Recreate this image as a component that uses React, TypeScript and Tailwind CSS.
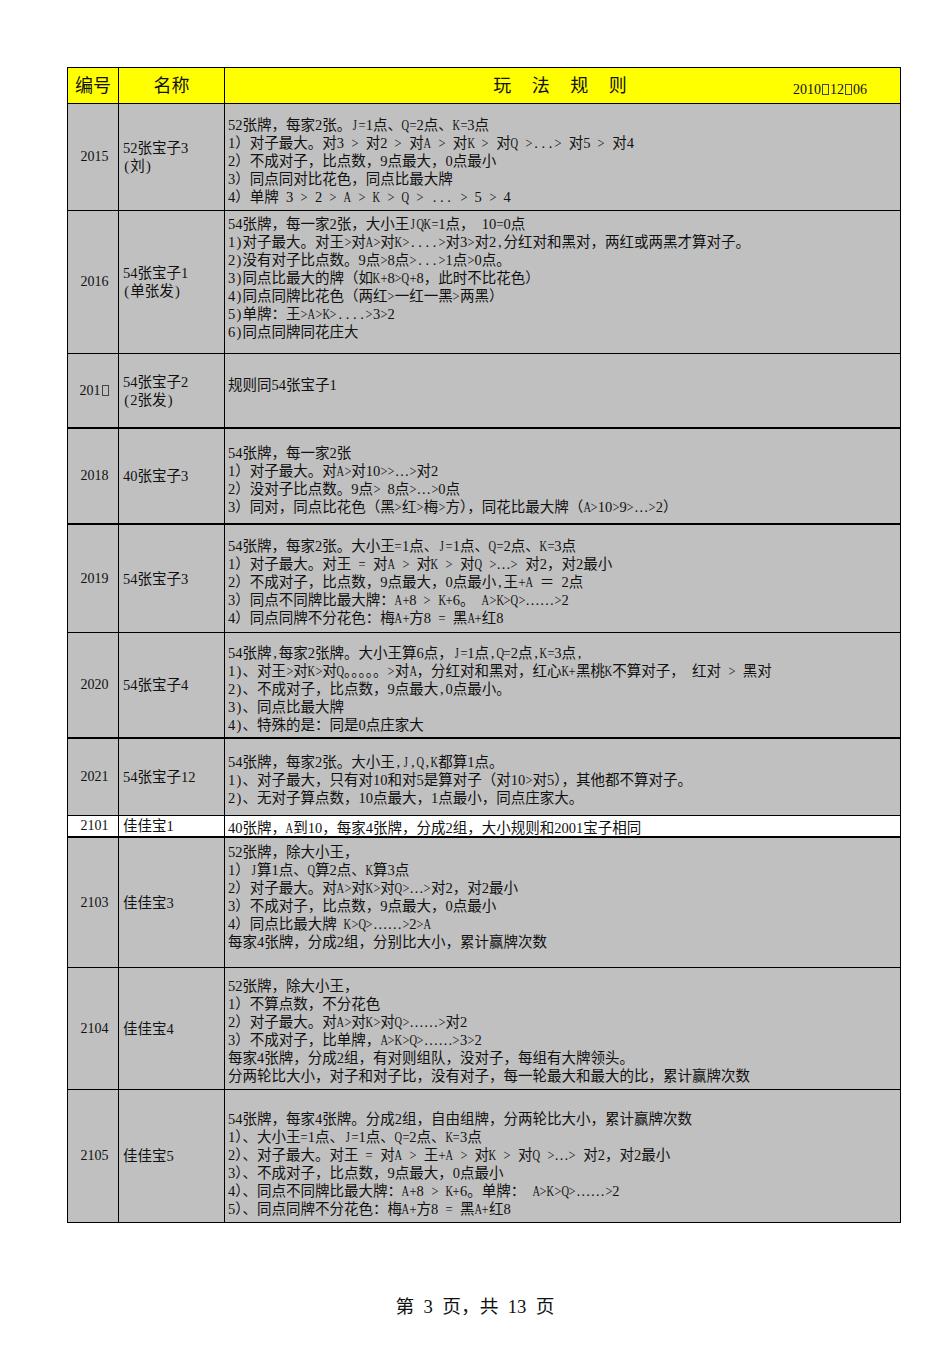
import React from "react";

const Tofu = () => (
  <span className="inline-block w-[7px] h-[11px] border border-[#444] mx-[1px] align-[-1px]" />
);

const Txt = ({ s, w = "w-[7.25px]" }: { s: string; w?: string }) => {
  const out: React.ReactNode[] = [];
  let buf = "";
  let k = 0;
  for (const c of s) {
    if (c.charCodeAt(0) < 128) {
      if (buf) {
        out.push(<React.Fragment key={k++}>{buf}</React.Fragment>);
        buf = "";
      }
      let inner: React.ReactNode = c === " " ? "\u00a0" : c;
      if (/[A-Z]/.test(c)) {
        inner = <span className="inline-block scale-x-[0.72]">{c}</span>;
      } else if (/[=+<>]/.test(c)) {
        inner = <span className="inline-block scale-x-[0.86]">{c}</span>;
      }
      out.push(
        <span key={k++} className={`inline-flex justify-center ${w}`}>
          {inner}
        </span>
      );
    } else {
      buf += c;
    }
  }
  if (buf) out.push(<React.Fragment key={k++}>{buf}</React.Fragment>);
  return <>{out}</>;
};

type Row = {
  num: React.ReactNode;
  name: string[];
  rules: string[];
  h: string;
  pt: string;
  thick?: boolean;
  white?: boolean;
};

const rows: Row[] = [
  {
    num: "2015",
    name: ["52张宝子3", "(刘)"],
    rules: [
      "52张牌，每家2张。J=1点、Q=2点、K=3点",
      "1）对子最大。对3 > 对2 > 对A > 对K > 对Q >...> 对5 > 对4",
      "2）不成对子，比点数，9点最大，0点最小",
      "3）同点同对比花色，同点比最大牌",
      "4）单牌 3 > 2 > A > K > Q > ... > 5 > 4",
    ],
    h: "h-[107px]",
    pt: "pt-[12px]",
  },
  {
    num: "2016",
    name: ["54张宝子1", "(单张发)"],
    rules: [
      "54张牌，每一家2张，大小王JQK=1点， 10=0点",
      "1)对子最大。对王>对A>对K>....>对3>对2,分红对和黑对，两红或两黑才算对子。",
      "2)没有对子比点数。9点>8点>...>1点>0点。",
      "3)同点比最大的牌（如K+8>Q+8，此时不比花色）",
      "4)同点同牌比花色（两红>一红一黑>两黑）",
      "5)单牌：王>A>K>....>3>2",
      "6)同点同牌同花庄大",
    ],
    h: "h-[143px]",
    pt: "pt-[4px]",
  },
  {
    num: (
      <>
        201
        <Tofu />
      </>
    ),
    name: ["54张宝子2", "(2张发)"],
    rules: ["规则同54张宝子1"],
    h: "h-[75px]",
    pt: "pt-[22px]",
    thick: true,
  },
  {
    num: "2018",
    name: ["40张宝子3"],
    rules: [
      "54张牌，每一家2张",
      "1）对子最大。对A>对10>>…>对2",
      "2）没对子比点数。9点> 8点>…>0点",
      "3）同对，同点比花色（黑>红>梅>方），同花比最大牌（A>10>9>…>2）",
    ],
    h: "h-[96px]",
    pt: "pt-[15px]",
    thick: true,
  },
  {
    num: "2019",
    name: ["54张宝子3"],
    rules: [
      "54张牌，每家2张。大小王=1点、J=1点、Q=2点、K=3点",
      "1）对子最大。对王 = 对A > 对K > 对Q >…> 对2，对2最小",
      "2）不成对子，比点数，9点最大，0点最小,王+A ＝ 2点",
      "3）同点不同牌比最大牌：A+8 > K+6。 A>K>Q>……>2",
      "4）同点同牌不分花色：梅A+方8 = 黑A+红8",
    ],
    h: "h-[108px]",
    pt: "pt-[12px]",
  },
  {
    num: "2020",
    name: ["54张宝子4"],
    rules: [
      "54张牌,每家2张牌。大小王算6点，J=1点,Q=2点,K=3点,",
      "1)、对王>对K>对Q。。。。。>对A，分红对和黑对，红心K+黑桃K不算对子， 红对 > 黑对",
      "2)、不成对子，比点数，9点最大,0点最小。",
      "3)、同点比最大牌",
      "4)、特殊的是：同是0点庄家大",
    ],
    h: "h-[106px]",
    pt: "pt-[11px]",
    thick: true,
  },
  {
    num: "2021",
    name: ["54张宝子12"],
    rules: [
      "54张牌，每家2张。大小王,J,Q,K都算1点。",
      "1)、对子最大，只有对10和对5是算对子（对10>对5），其他都不算对子。",
      "2)、无对子算点数，10点最大，1点最小，同点庄家大。",
    ],
    h: "h-[77px]",
    pt: "pt-[14px]",
  },
  {
    num: "2101",
    name: ["佳佳宝1"],
    rules: ["40张牌，A到10，每家4张牌，分成2组，大小规则和2001宝子相同"],
    h: "h-[22px]",
    pt: "pt-[3px]",
    thick: true,
    white: true,
  },
  {
    num: "2103",
    name: ["佳佳宝3"],
    rules: [
      "52张牌，除大小王，",
      "1）J算1点、Q算2点、K算3点",
      "2）对子最大。对A>对K>对Q>…>对2，对2最小",
      "3）不成对子，比点数，9点最大，0点最小",
      "4）同点比最大牌 K>Q>……>2>A",
      "每家4张牌，分成2组，分别比大小，累计赢牌次数",
    ],
    h: "h-[130px]",
    pt: "pt-[5px]",
  },
  {
    num: "2104",
    name: ["佳佳宝4"],
    rules: [
      "52张牌，除大小王，",
      "1）不算点数，不分花色",
      "2）对子最大。对A>对K>对Q>……>对2",
      "3）不成对子，比单牌，A>K>Q>……>3>2",
      "每家4张牌，分成2组，有对则组队，没对子，每组有大牌领头。",
      "分两轮比大小，对子和对子比，没有对子，每一轮最大和最大的比，累计赢牌次数",
    ],
    h: "h-[122px]",
    pt: "pt-[9px]",
  },
  {
    num: "2105",
    name: ["佳佳宝5"],
    rules: [
      "54张牌，每家4张牌。分成2组，自由组牌，分两轮比大小，累计赢牌次数",
      "1）、大小王=1点、J=1点、Q=2点、K=3点",
      "2）、对子最大。对王 = 对A > 王+A > 对K > 对Q >…> 对2，对2最小",
      "3）、不成对子，比点数，9点最大，0点最小",
      "4）、同点不同牌比最大牌：A+8 > K+6。单牌： A>K>Q>……>2",
      "5）、同点同牌不分花色：梅A+方8 = 黑A+红8",
    ],
    h: "h-[133px]",
    pt: "pt-[20px]",
  },
];

export default function App() {
  return (
    <div className="w-[950px] h-[1345px] bg-white font-['Liberation_Serif','Noto_Sans_CJK_SC',serif] text-[#111] pt-[67px] pl-[67px]">
      <div className="w-[834px] border-t border-l border-black">
        {/* header */}
        <div className="flex h-[36px] bg-[#ffff00] border-b border-black">
          <div className="w-[51px] border-r border-black flex items-center justify-center text-[18px] pt-[2px]">
            编号
          </div>
          <div className="w-[106px] border-r border-black flex items-center justify-center text-[18px] pt-[2px]">
            名称
          </div>
          <div className="flex-1 border-r border-black grid grid-cols-[1fr_auto_1fr] items-center">
            <div />
            <div className="flex gap-[20.5px] text-[18px] pr-[5px] pt-[2px]">
              <span>玩</span>
              <span>法</span>
              <span>规</span>
              <span>则</span>
            </div>
            <div className="flex justify-end pr-[33px] pt-[8px] text-[14px]">
              <span>
                2010
                <Tofu />
                12
                <Tofu />
                06
              </span>
            </div>
          </div>
        </div>
        {rows.map((r, i) => (
          <div
            key={i}
            className={`flex ${r.h} ${r.white ? "bg-white" : "bg-[#c0c0c0]"} ${
              r.thick ? "border-b-2" : "border-b"
            } border-black text-[14.5px] leading-[18px]`}
          >
            <div className="w-[51px] border-r border-black flex items-center justify-center pl-[3px]">
              <span className="text-[14px]">{r.num}</span>
            </div>
            <div className="w-[106px] border-r border-black flex flex-col justify-center pl-[4px]">
              {r.name.map((n, j) => (
                <div key={j} className="whitespace-nowrap">
                  <Txt s={n} />
                </div>
              ))}
            </div>
            <div className={`flex-1 border-r border-black pl-[3px] ${r.pt} overflow-hidden`}>
              {r.rules.map((l, j) => (
                <div key={j} className="whitespace-nowrap">
                  <Txt s={l} />
                </div>
              ))}
            </div>
          </div>
        ))}
      </div>
      <div className="w-[816px] text-center mt-[70px] text-[18.7px] whitespace-nowrap">
        <Txt s="第 3 页，共 13 页" w="w-[9.35px]" />
      </div>
    </div>
  );
}
